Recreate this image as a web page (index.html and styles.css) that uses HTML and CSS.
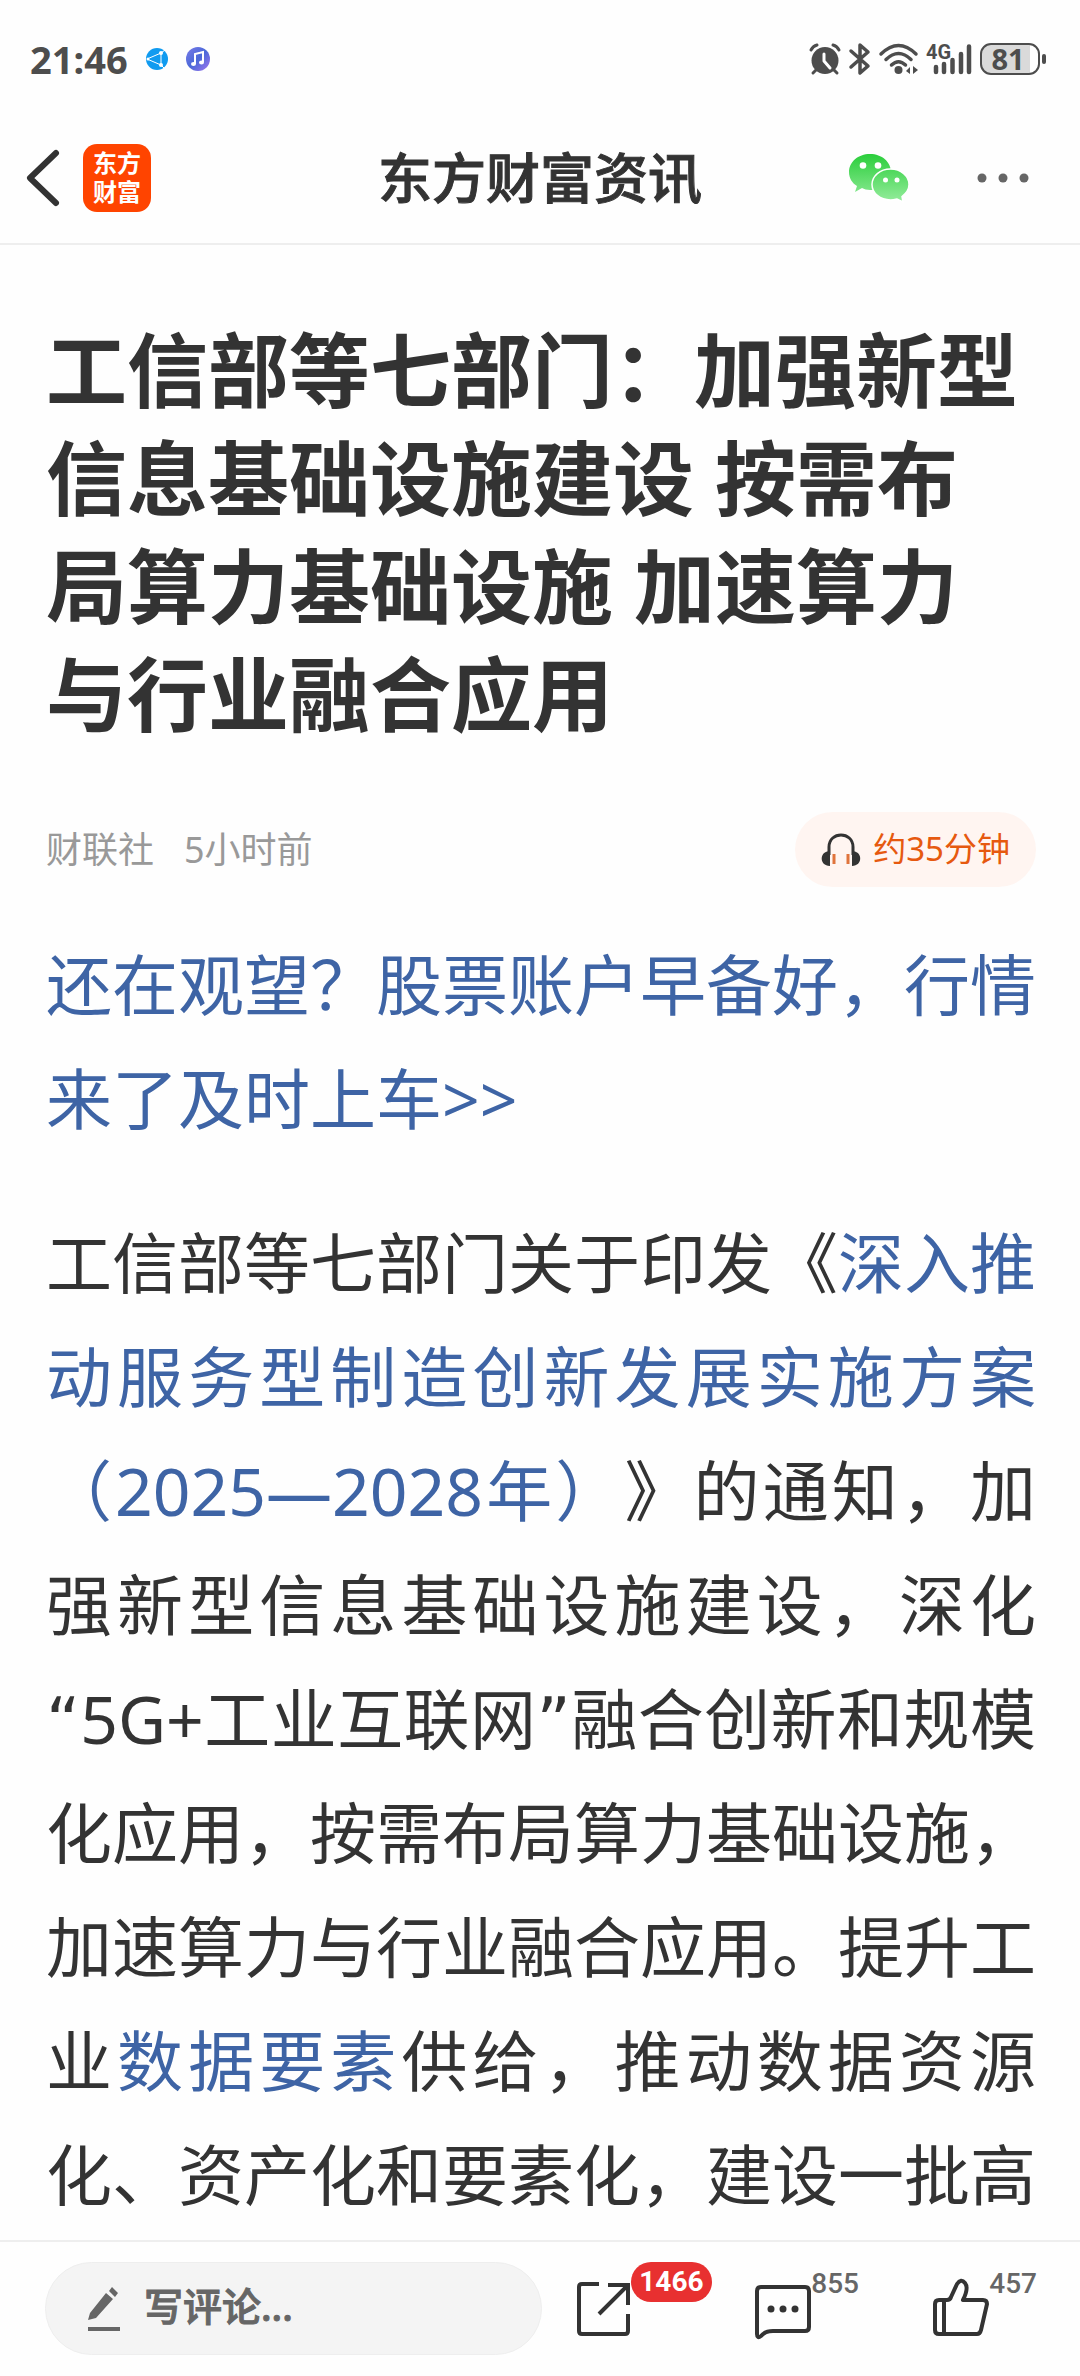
FILE: index.html
```
<!DOCTYPE html>
<html lang="zh-CN">
  <head>
    <meta charset="UTF-8" />
    <meta name="viewport" content="width=device-width, initial-scale=1.0" />
    <title>东方财富资讯</title>
    <link rel="stylesheet" href="styles.css">
  </head>
  <body>
    <div class="status-bar">
      <div class="status-left">
        <span class="time">21:46</span>
        <svg class="app-dot" width="24" height="24" viewBox="0 0 24 24">
          <circle cx="12" cy="12" r="11" fill="#109bf0" />
          <path d="M2 12 L16 6 V18 Z M16 6 L20 3 M16 18 L19 21" fill="none" stroke="#fff" stroke-width="1" />
          <circle cx="16" cy="6" r="2" fill="#fff" />
          <circle cx="16" cy="18" r="2" fill="#fff" />
          <circle cx="3" cy="12" r="1.5" fill="#fff" />
        </svg>
        <svg class="app-dot" width="24" height="24" viewBox="0 0 24 24">
          <defs>
            <linearGradient id="music" x1="0" y1="0" x2="1" y2="1">
              <stop offset="0" stop-color="#7a7be8" />
              <stop offset="0.5" stop-color="#4a68d8" />
              <stop offset="1" stop-color="#a276ee" />
            </linearGradient>
          </defs>
          <circle cx="12" cy="12" r="12" fill="url(#music)" />
          <path d="M9 17 V7 L17 5 V15" fill="none" stroke="#fff" stroke-width="2" />
          <ellipse cx="7.500" cy="17" rx="2.500" ry="2" fill="#fff" />
          <ellipse cx="15.500" cy="15.500" rx="2.500" ry="2" fill="#fff" />
        </svg>
      </div>
      <div class="status-right">
        <svg width="32" height="32" viewBox="0 0 32 32">
          <circle cx="16" cy="17.500" r="13.500" fill="#4d4d4d" />
          <path d="M2 7 Q4 3 8 2 M24 2 Q28 3 30 7 M7 27 L4 30 M25 27 L28 30" fill="none" stroke="#4d4d4d" stroke-width="3" stroke-linecap="round" />
          <path d="M15 11 V18 L21 25" fill="none" stroke="#fff" stroke-width="3" stroke-linecap="round" stroke-linejoin="round" />
        </svg>
        <svg class="bluetooth" width="22" height="32" viewBox="0 0 22 32">
          <path d="M2 8 L19 23 L11 30 V2 L19 9 L2 24" fill="none" stroke="#4d4d4d" stroke-width="3.500" stroke-linecap="round" stroke-linejoin="round" />
        </svg>
        <svg class="wifi" width="40" height="32" viewBox="0 0 40 32">
          <path d="M2 11 Q19.500 -6 37 11 M7 16.500 Q19.500 4.500 32 16.500 M12.500 22 Q19.500 15.500 26.500 22" fill="none" stroke="#4d4d4d" stroke-width="3.500" stroke-linecap="round" />
          <circle cx="19.500" cy="27" r="4" fill="#4d4d4d" />
          <path d="M27 28 L31 24 V31 Z M39 27 L34 31 V23 Z" fill="#4d4d4d" />
        </svg>
        <div class="signal">
          <span class="net">4G</span>
          <svg width="46" height="32" viewBox="0 0 46 32">
            <path d="M10 24 V29 M18 21 V29 M26.500 17 V29 M35 11 V29 M43 3.500 V29" stroke="#4d4d4d" stroke-width="4.500" stroke-linecap="round" />
          </svg>
        </div>
        <div class="battery">81</div>
      </div>
    </div>

    <header class="nav-bar">
      <div class="nav-side">
        <button class="icon-btn" aria-label="返回">
          <svg width="34" height="56" viewBox="0 0 34 56">
            <path d="M30 3 L4 28 L30 53" fill="none" stroke="#333" stroke-width="6" stroke-linecap="round" stroke-linejoin="round" />
          </svg>
        </button>
        <a class="logo" href="#">东方<br>财富</a>
      </div>
      <h2 class="nav-title">东方财富资讯</h2>
      <div class="nav-side nav-actions">
        <button class="icon-btn" aria-label="微信分享">
          <svg width="62" height="50" viewBox="0 0 62 50">
            <defs>
              <linearGradient id="wechat" gradientUnits="userSpaceOnUse" x1="0" y1="0" x2="0" y2="50">
                <stop offset="0" stop-color="#28cd39" />
                <stop offset="1" stop-color="#97ed9e" />
              </linearGradient>
            </defs>
            <path d="M22 1 C10 1 1 9 1 19 C1 25 4 30 9 33 L7 39 L14 35 C16 36 19 37 22 37 C34 37 43 29 43 19 C43 9 34 1 22 1 Z" fill="url(#wechat)" />
            <circle cx="15" cy="12.500" r="3.300" fill="#fff" />
            <circle cx="30" cy="12.500" r="3.300" fill="#fff" />
            <path d="M42.500 16 C32 16 24 23 24 31.500 C24 40 32 47 42.500 47 C45 47 47 46.500 49 46 L55 49 L54 43.500 C58 40.500 61 36.500 61 31.500 C61 23 53 16 42.500 16 Z" fill="url(#wechat)" stroke="#fff" stroke-width="1.500" />
            <circle cx="37.500" cy="27" r="2.500" fill="#fff" />
            <circle cx="49" cy="27" r="2.500" fill="#fff" />
          </svg>
        </button>
        <button class="icon-btn" aria-label="更多">
          <svg width="54" height="12" viewBox="0 0 54 12">
            <circle cx="6" cy="6" r="4.500" fill="#666" />
            <circle cx="27" cy="6" r="4.500" fill="#666" />
            <circle cx="48" cy="6" r="4.500" fill="#666" />
          </svg>
        </button>
      </div>
    </header>

    <main class="article">
      <h1 class="article-title">工信部等七部门：加强新型信息基础设施建设 按需布局算力基础设施 加速算力与行业融合应用</h1>
      <div class="meta">
        <span class="source">财联社</span>
        <span class="date">5小时前</span>
        <button class="listen">
          <svg width="40" height="34" viewBox="0 0 40 34">
            <path d="M8 22 V14 C8 -2 32 -2 32 14 V22" fill="none" stroke="#333" stroke-width="3" />
            <path d="M9 18 V33 C-2 33 -2 18 9 18 Z M31 18 V33 C42 33 42 18 31 18 Z" fill="#333" />
            <path d="M13 21 V31 M27 21 V31" stroke="#e0743c" stroke-width="3" />
          </svg>
          <span>约35分钟</span>
        </button>
      </div>
      <p><a href="#">还在观望？股票账户早备好，行情来了及时上车&gt;&gt;</a></p>
      <p>工信部等七部门关于印发《<a href="#">深入推动服务型制造创新发展实施方案（2025—2028年）</a>》的通知，加强新型信息基础设施建设，深化<span class="quote">“</span>5G+工业互联网<span class="quote">”</span>融合创新和规模化应用，按需布局算力基础设施，加速算力与行业融合应用。提升工业<a href="#">数据要素</a>供给，推动数据资源化、资产化和要素化，建设一批高</p>
    </main>

    <footer class="toolbar">
      <label class="comment-box">
        <svg width="32" height="44" viewBox="0 0 32 44">
          <path d="M0 33 L2 26 L18 6 L25 12 L8 31 Z M21 4 L24 0 L30 6 L27 10 Z" fill="#666" />
          <path d="M0 42 H32" stroke="#666" stroke-width="4" />
        </svg>
        <input type="text" placeholder="写评论..." aria-label="写评论" />
      </label>
      <div class="actions">
        <button class="action" aria-label="分享">
          <svg width="54" height="58" viewBox="0 0 54 58">
            <path d="M22 4 H5 Q2 4 2 7 V51 Q2 54 5 54 H48 Q51 54 51 51 V34 M31 5 H51 V25 M51 5 L22 34" fill="none" stroke="#333" stroke-width="4" />
          </svg>
          <span class="count badge">1466</span>
        </button>
        <button class="action" aria-label="评论">
          <svg width="56" height="58" viewBox="0 0 56 58">
            <path d="M6 7 H50 Q54 7 54 11 V47 Q54 51 50 51 H18 Q10 51 6 56 Q2 59 2 54 V11 Q2 7 6 7 Z" fill="none" stroke="#333" stroke-width="4" />
            <circle cx="16" cy="29" r="3.500" fill="#333" />
            <circle cx="28" cy="29" r="3.500" fill="#333" />
            <circle cx="40" cy="29" r="3.500" fill="#333" />
          </svg>
          <span class="count">855</span>
        </button>
        <button class="action" aria-label="点赞">
          <svg width="56" height="58" viewBox="0 0 56 58">
            <path d="M6 20 H14 Q17 20 18 17 L24 4 Q28 -2 32 3 Q36 8 30 20 H50 Q54 20 54 24 L48 50 Q47 54 44 54 H6 Q2 54 2 50 V24 Q2 20 6 20 Z M11 20 V54" fill="none" stroke="#333" stroke-width="4" stroke-linejoin="round" />
          </svg>
          <span class="count">457</span>
        </button>
      </div>
    </footer>
  </body>
</html>
```
FILE: styles.css
```
* {
  box-sizing: border-box;
}
body {
  margin: 0;
  min-height: 100vh;
  display: flex;
  flex-direction: column;
  background-color: #fefefe;
  color: #333;
  font-family: "Noto Sans", "Noto Sans CJK SC", sans-serif;
}
svg {
  display: block;
  flex: none;
  overflow: visible;
}
button {
  padding: 0;
  border: none;
  background: none;
  color: inherit;
  font-family: inherit;
}
a {
  color: #3e64a5;
  text-decoration: none;
}

/* status bar */
.status-bar {
  display: flex;
  justify-content: space-between;
  align-items: center;
  height: 112px;
  padding: 6px 40px 0 30px;
  color: #4d4d4d;
}
.status-left,
.status-right {
  display: flex;
  align-items: center;
}
.time {
  font-size: 38px;
  font-weight: 700;
}
.app-dot {
  margin-left: 17px;
}
.bluetooth {
  margin-left: 8px;
}
.wifi {
  margin-left: 8px;
}
.signal {
  position: relative;
  margin: 0 8px 0 7px;
}
.net {
  position: absolute;
  top: 0;
  left: 0;
  font-family: Roboto, sans-serif;
  font-size: 20px;
  font-weight: 700;
  line-height: 18px;
}
.battery {
  position: relative;
  width: 60px;
  height: 32px;
  border: 2px solid #4d4d4d;
  border-radius: 11px;
  background: linear-gradient(to right, #dadada 85%, #fff 85%);
  padding-right: 4px;
  font-size: 29px;
  font-weight: 700;
  line-height: 28px;
  text-align: center;
}
.battery::after {
  content: "";
  position: absolute;
  top: 9px;
  right: -8px;
  width: 4px;
  height: 10px;
  border-radius: 2px;
  background-color: #4d4d4d;
}

/* navigation */
.nav-bar {
  display: flex;
  align-items: center;
  height: 133px;
  padding: 0 26px;
  border-bottom: 2px solid #eee;
}
.nav-side {
  display: flex;
  flex: 1;
  align-items: center;
  gap: 23px;
}
.nav-actions {
  justify-content: flex-end;
  gap: 66px;
  padding-right: 24px;
}
.logo {
  width: 68px;
  height: 68px;
  padding-top: 4px;
  border-radius: 14px;
  background-color: #ff4400;
  color: #fff;
  font-size: 24px;
  font-weight: 700;
  line-height: 29px;
  text-align: center;
}
.nav-title {
  margin: 0;
  padding: 0 0 4px 24px;
  font-size: 54px;
  font-weight: 500;
  -webkit-text-stroke: 1px;
}

/* article */
.article {
  flex: 1;
  padding: 71px 44px 7px 46px;
}
.article-title {
  margin: 0;
  padding-right: 10px;
  font-size: 81px;
  font-weight: 700;
  line-height: 108px;
}
.meta {
  display: flex;
  align-items: center;
  gap: 30px;
  margin: 64px 0 40px;
  color: #999;
  font-size: 36px;
}
.meta span {
  padding-bottom: 5px;
}
.listen {
  display: flex;
  align-items: center;
  gap: 12px;
  height: 75px;
  margin-left: auto;
  padding: 0 26px;
  border-radius: 38px;
  background-color: #fff5f1;
  color: #e6590f;
  font-size: 33px;
}
.article p {
  margin: 0 0 50px;
  font-size: 66px;
  line-height: 114px;
  text-align: justify;
  text-spacing-trim: space-all;
}
.article p:last-child {
  margin-bottom: 0;
}
.quote {
  font-family: "DejaVu Sans", sans-serif;
  line-height: 1;
}

/* bottom toolbar */
.toolbar {
  display: flex;
  gap: 35px;
  height: 136px;
  padding: 20px 43px 21px 45px;
  border-top: 2px solid #eee;
}
.comment-box {
  display: flex;
  flex: 1;
  align-items: center;
  gap: 24px;
  min-width: 0;
  padding: 0 42px;
  border: 1px solid #eee;
  border-radius: 50px;
  background-color: #f4f4f4;
}
.comment-box input {
  width: 100%;
  min-width: 0;
  padding: 0 0 6px;
  border: none;
  outline: none;
  background: none;
  color: #333;
  font-family: inherit;
  font-size: 39px;
  font-weight: 500;
}
.comment-box input::placeholder {
  color: #666;
  opacity: 1;
  -webkit-text-stroke: 1px;
}
.actions {
  display: flex;
}
.action {
  display: flex;
  flex: 0 0 178px;
  align-items: flex-start;
  padding-top: 18px;
}
.action:last-child {
  flex-basis: auto;
}
.count {
  height: 40px;
  margin-top: -16px;
  color: #666;
  font-family: Roboto, sans-serif;
  font-size: 28px;
  font-weight: 500;
  line-height: 40px;
}
.badge {
  margin-top: -18px;
  padding: 0 8px;
  border-radius: 20px;
  background-color: #e83030;
  color: #fff;
  font-weight: 700;
}
```
